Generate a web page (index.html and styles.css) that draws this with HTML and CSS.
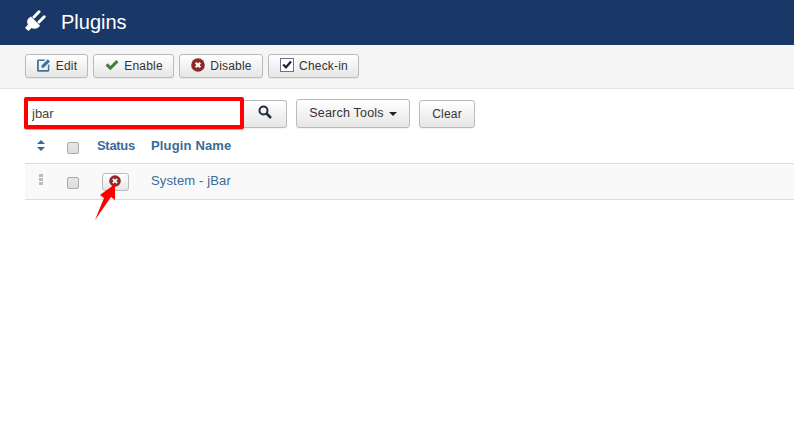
FILE: index.html
```html
<!DOCTYPE html>
<html lang="en">
<head>
<meta charset="utf-8">
<title>Plugins</title>
<link rel="stylesheet" href="styles.css">
</head>
<body>
<header class="header">
  <svg class="plug" viewBox="0 0 21 21"><path d="M6 6.500L15 15.500C14 18 10 20 6.500 18L3.500 21 0 18 3 14.500C1 11 3 8 6 6.500z" fill="#fff"/><path d="M9 7L14 1.800M14 12L19.200 6.800" stroke="#fff" stroke-width="3" stroke-linecap="round"/></svg>
  <h1 class="title">Plugins</h1>
</header>
<div class="toolbar">
  <button class="btn tool"><svg class="ico" viewBox="0 0 14 14"><path d="M0 3A1.500 1.500 0 0 1 1.500 1.500H8.500L7 3H1.800V12H10.800V7.500L12.300 6V12.300A1.500 1.500 0 0 1 10.800 13.800H1.500A1.500 1.500 0 0 1 0 12.300z" fill="#3f7199"/><path d="M4.500 7.500L10.800 1.200 13 3.400 6.700 9.700H4.500z" fill="#3f7199"/></svg>Edit</button>
  <button class="btn tool"><svg class="ico" viewBox="0 0 14 14"><path d="M.5 7.500L2.700 5.300 5.300 7.900 11.300 2 13.500 4.200 5.300 12.300z" fill="#3f7f3a"/></svg>Enable</button>
  <button class="btn tool"><svg class="ico" viewBox="0 0 14 14"><circle cx="7" cy="7" r="6.800" fill="#8c2b2b"/><path d="M4.700 4.700l4.600 4.600m0-4.600L4.700 9.300" stroke="#fff" stroke-width="2.200"/></svg>Disable</button>
  <button class="btn tool"><svg class="ico" viewBox="0 0 14 14"><rect x=".5" y=".5" width="13" height="13" fill="#fff" stroke="#7a6a8a"/><path d="M3.200 6.500L6 9.300 11 3.500" fill="none" stroke="#1c2430" stroke-width="2.200"/></svg>Check-in</button>
</div>
<div class="filters">
  <div class="search-group">
    <input class="search-input" type="text" value="jbar">
    <button class="btn search-btn"><svg class="mag" viewBox="0 0 14 14"><circle cx="5.500" cy="5.500" r="4" fill="none" stroke="#222d3a" stroke-width="2"/><path d="M8.500 8.500L13 13" stroke="#222d3a" stroke-width="2.500"/></svg></button>
  </div>
  <button class="btn tools-btn"><span class="tools-label">Search Tools</span><span class="caret"></span></button>
  <button class="btn clear-btn">Clear</button>
</div>
<div class="table">
  <div class="row head">
    <div class="c-sort"><svg class="sort" viewBox="0 0 8 11"><path d="M4 0l4 4H0zM4 11L0 7h8z" fill="#2f6b9e"/></svg></div>
    <div class="c-check"><span class="box"></span></div>
    <div class="c-status">Status</div>
    <div class="c-name">Plugin Name</div>
  </div>
  <div class="row item">
    <div class="c-sort"><span class="grip"><i></i><i></i><i></i></span></div>
    <div class="c-check"><span class="box"></span></div>
    <div class="c-status"><span class="status-btn"><svg class="ico-s" viewBox="0 0 12 12"><circle cx="6" cy="6" r="5.800" fill="#8c2b2b"/><path d="M3.800 3.800l4.400 4.400m0-4.400L3.800 8.200" stroke="#fff" stroke-width="1.800"/></svg></span></div>
    <div class="c-name">System - jBar</div>
  </div>
</div>
<svg class="arrow" viewBox="0 0 30 45"><path d="M1 43L10 21 6 18 21 7 21 23 17 20z" fill="#f00"/></svg>
</body>
</html>
```
FILE: styles.css
```css
* { box-sizing: border-box; }
html, body { margin: 0; padding: 0; background: #fff; }
body { font-family: "Liberation Sans", Arial, sans-serif; font-size: 12px; color: #333; height: 422px; overflow: hidden; position: relative; }
.header { height: 45px; background: #1a3867; display: flex; align-items: center; padding-left: 25px; }
.plug { width: 21px; height: 21px; margin-right: 15px; margin-top: -4px; }
.title { margin: 0; font-size: 20px; font-weight: 400; color: #fff; margin-top: -1px; }
.toolbar { height: 44px; background: #f5f5f5; border-bottom: 1px solid #e3e3e3; padding: 9px 0 0 25px; display: flex; gap: 5px; align-items: flex-start; }
.btn { font-family: inherit; font-size: 12px; color: #333; border: 1px solid #bbb; border-radius: 3px; background: linear-gradient(#fff, #e6e6e6); display: inline-flex; align-items: center; justify-content: center; padding: 0; letter-spacing: .2px; box-shadow: 0 1px 1px rgba(0,0,0,.05); }
.tool { height: 24px; padding: 0 10px 0 11px; }
.tool:nth-child(1) { width: 63px; }
.tool:nth-child(2) { width: 81px; }
.tool:nth-child(3) { width: 84px; }
.tool:nth-child(4) { width: 91px; }
.ico { width: 14px; height: 14px; margin-right: 5px; margin-top: -2px; flex: none; }
.filters { display: flex; align-items: center; padding: 8px 0 0 24px; height: 41px; }
.search-group { display: flex; align-items: center; }
.search-input { width: 220px; height: 32px; margin-top: -2px; border: 4px solid #f00; border-radius: 2px; padding: 2px 4px 0; font: 13px "Liberation Sans", Arial, sans-serif; color: #444; background: #fff; outline: none; box-shadow: 0 1px 1px rgba(0,0,0,.3); }
.search-btn { width: 43px; height: 28px; border-left: 0; border-radius: 0 3px 3px 0; }
.mag { width: 14px; height: 14px; margin-top: -3px; }
.tools-btn { width: 114px; height: 29px; margin-left: 9px; font-size: 12.500px; }
.tools-label { margin-top: -2px; }
.caret { width: 0; height: 0; margin-left: 5px; margin-top: 1px; border-left: 4px solid transparent; border-right: 4px solid transparent; border-top: 4px solid #222; }
.clear-btn { width: 56px; height: 28px; margin-left: 9px; }
.table { margin-left: 25px; }
.row { display: flex; align-items: center; border-bottom: 1px solid #ddd; }
.head { height: 34px; font-size: 13px; font-weight: 700; color: #3a6a97; }
.item { height: 36px; font-size: 13px; background: #f9f9f9; color: #3a6a97; }
.c-name { letter-spacing: .15px; }
.c-sort { width: 32px; display: flex; justify-content: center; margin-left: 0; }
.c-check { width: 40px; padding-left: 10px; display: flex; }
.c-status { width: 54px; padding-left: 0; }
.head .c-status { letter-spacing: -.3px; }
.head .c-sort { margin-top: -3px; }
.head .c-status, .head .c-name { margin-top: -2px; }
.item .c-sort { margin-top: -5px; }
.item .c-name { margin-top: -3px; }
.sort { width: 8px; height: 11px; }
.box { width: 12px; height: 12px; border: 1px solid #aaa; border-radius: 2px; background: linear-gradient(#e6e6e6, #dcdcdc); display: block; margin-top: 2px; }
.grip { display: flex; flex-direction: column; gap: 1px; }
.grip i { width: 4px; height: 3px; background: #bbb; display: block; }
.status-btn { display: flex; width: 27px; height: 18px; margin-left: 5px; border: 1px solid #bbb; border-radius: 3px; background: linear-gradient(#fff, #e6e6e6); align-items: center; justify-content: center; margin-top: 1px; }
.ico-s { width: 12px; height: 12px; margin-right: 1px; margin-top: -2px; }
.arrow { position: absolute; left: 94px; top: 177px; width: 30px; height: 45px; }
```
